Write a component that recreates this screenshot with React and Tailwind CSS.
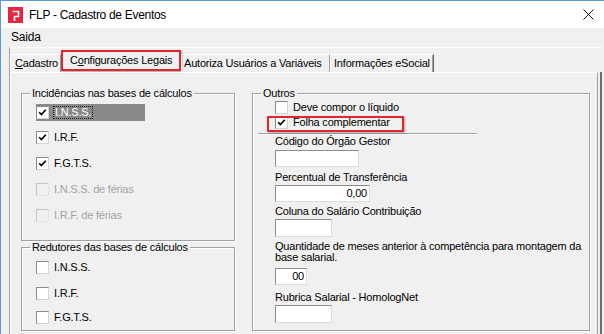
import React from "react";

const CheckBox = ({ checked, disabled }) => (
  <span
    className={`w-[13px] h-[13px] shrink-0 flex items-center justify-center border ${
      disabled
        ? "bg-[#f0f0f0] border-t-[#c4c4c4] border-l-[#c4c4c4] border-r-[#e3e3e3] border-b-[#e3e3e3]"
        : "bg-white border-t-[#8a8a8a] border-l-[#8a8a8a] border-r-[#d4d4d4] border-b-[#d4d4d4]"
    }`}
  >
    {checked && (
      <svg width="9" height="9" viewBox="0 0 9 9">
        <path d="M1.2 4.2 L3.4 6.6 L7.8 1.8" stroke="#000" strokeWidth="1.7" fill="none" />
      </svg>
    )}
  </span>
);

const Row = ({ label, checked, disabled, h = "h-[26px]" }) => (
  <div className={`flex items-center ${h}`}>
    <CheckBox checked={checked} disabled={disabled} />
    <span className={`ml-[5px] ${disabled ? "text-[#a3a3a3]" : "text-black"}`}>{label}</span>
  </div>
);

const Field = ({ w, h = "h-[17px]", value, mt }) => (
  <div
    className={`${w} ${h} ${mt} bg-white border border-t-[#8d8d8d] border-l-[#8d8d8d] border-r-[#dcdcdc] border-b-[#dcdcdc] flex items-center justify-end pr-[2px]`}
  >
    {value}
  </div>
);

const Tab = ({ children, w, pl, last }) => (
  <div
    className={`${w} ${pl} h-[18px] flex items-center border-t border-l border-t-white border-l-white ${
      last ? "border-r border-r-[#696969] shadow-[inset_-1px_0_0_#a0a0a0]" : "border-r border-r-[#a0a0a0]"
    } whitespace-nowrap`}
  >
    {children}
  </div>
);

export default function App() {
  return (
    <div className="w-[604px] h-[334px] overflow-hidden bg-[#f0f0f0] border-l border-t border-[#5a9ad8] font-['Liberation_Sans',Arial,sans-serif] text-[11px] tracking-[-0.2px] text-black leading-[13px]">
      {/* Title bar */}
      <div className="h-[27px] bg-white flex items-center">
        <svg width="15" height="16" viewBox="0 0 15 16" className="ml-[7px]">
          <rect width="15" height="16" fill="#e4263f" />
          <path d="M4.5 4.5 H10.5 V9.5 H6.5 V14" stroke="#fff" strokeWidth="1.6" fill="none" />
        </svg>
        <span className="ml-[6px] text-[12px] tracking-[-0.3px] leading-[16px]">FLP - Cadastro de Eventos</span>
        <svg width="11" height="11" viewBox="0 0 11 11" className="ml-auto mr-[10px]">
          <path d="M0.5 0.5 L10.5 10.5 M10.5 0.5 L0.5 10.5" stroke="#111" strokeWidth="1" />
        </svg>
      </div>

      {/* Menu */}
      <div className="h-[19px] flex items-center pl-[10px] text-[12px] tracking-[-0.2px]">Saida</div>

      {/* Tab control */}
      <div className="ml-[8px] w-[593px] border-t border-l border-t-white border-l-[#a0a0a0]">
        <div className="h-[24px] flex items-end">
          <Tab w="w-[51px]" pl="pl-[4px]">
            <span>
              <span className="underline">C</span>adastro
            </span>
          </Tab>
          <div className="w-[120px] h-[21px] mb-[1px] border-2 border-[#e3262c] shadow-[1px_1px_2px_rgba(0,0,0,0.35)] flex items-center pl-[7px] whitespace-nowrap">
            C<span className="underline">o</span>nfigurações Legais
          </div>
          <Tab w="w-[149px]" pl="pl-[2px]">
            Autoriza Usuários a Variáveis
          </Tab>
          <Tab w="w-[104px]" pl="pl-[3px]" last>
            Informações eSocial
          </Tab>
        </div>

        <div className="flex">
          <div className="w-[588px] h-[270px] border-t border-l border-t-white border-l-white border-r border-r-[#a0a0a0] flex pt-[14px] pl-[10px] gap-[17px]">
            {/* Left column */}
            <div className="w-[214px] flex flex-col">
              <fieldset className="h-[154px] border border-[#a0a0a0] shadow-[inset_1px_1px_0_#fff,1px_1px_0_#fff]">
                <legend className="ml-[8px] px-[2px] leading-[13px]">Incidências nas bases de cálculos</legend>
                <div className="pl-[14px]">
                  <div className="flex items-center h-[24px]">
                    <div className="w-[109px] h-[17px] bg-[#898989] flex items-center">
                      <CheckBox checked />
                      <span className="ml-[4px] px-[1px] border border-dotted border-[#1a1a1a] text-white leading-[11px]">
                        I.N.S.S.
                      </span>
                    </div>
                  </div>
                  <Row label="I.R.F." checked />
                  <Row label="F.G.T.S." checked />
                  <Row label="I.N.S.S. de férias" disabled />
                  <Row label="I.R.F. de férias" disabled />
                </div>
              </fieldset>

              <fieldset className="h-[90px] border border-[#a0a0a0] shadow-[inset_1px_1px_0_#fff,1px_1px_0_#fff]">
                <legend className="ml-[8px] px-[2px] leading-[13px]">Redutores das bases de cálculos</legend>
                <div className="pl-[14px]">
                  <Row label="I.N.S.S." />
                  <Row label="I.R.F." />
                  <Row label="F.G.T.S." h="h-[23px]" />
                </div>
              </fieldset>
            </div>

            {/* Outros */}
            <fieldset className="w-[338px] h-[244px] border border-[#a0a0a0] shadow-[inset_1px_1px_0_#fff,1px_1px_0_#fff]">
              <legend className="ml-[8px] px-[2px] leading-[13px]">Outros</legend>
              <div className="pl-[22px]">
                <Row label="Deve compor o líquido" h="h-[14px]" />
                <div className="relative">
                  <Row label="Folha complementar" checked h="h-[17px]" />
                  <div className="absolute left-[-8px] top-[2px] w-[137px] h-[16px] border-2 border-[#e3262c] shadow-[1px_1px_2px_rgba(0,0,0,0.3)]" />
                </div>
                <div className="ml-[-17px] mt-[2px] w-[219px] h-[1px] bg-[#a0a0a0] shadow-[0_1px_0_#fff]" />
                <div className="mt-[1px] leading-[13px]">Código do Órgão Gestor</div>
                <Field w="w-[84px]" mt="mt-[2px]" />
                <div className="mt-[4px] leading-[13px]">Percentual de Transferência</div>
                <Field w="w-[95px]" mt="mt-[1px]" value="0,00" />
                <div className="mt-[3px] leading-[13px]">Coluna do Salário Contribuição</div>
                <Field w="w-[57px]" h="h-[18px]" mt="mt-[1px]" />
                <div className="mt-[4px] leading-[11px] whitespace-nowrap">
                  Quantidade de meses anterior à competência para montagem da
                  <br />
                  base salarial.
                </div>
                <Field w="w-[32px]" mt="mt-[5px]" value="00" />
                <div className="mt-[6px] leading-[13px]">Rubrica Salarial - HomologNet</div>
                <Field w="w-[57px]" h="h-[18px]" mt="mt-[1px]" />
              </div>
            </fieldset>
          </div>
          <div className="ml-[2px] w-[2px] h-[270px] bg-[#6e6e6e]" />
        </div>
      </div>
    </div>
  );
}
